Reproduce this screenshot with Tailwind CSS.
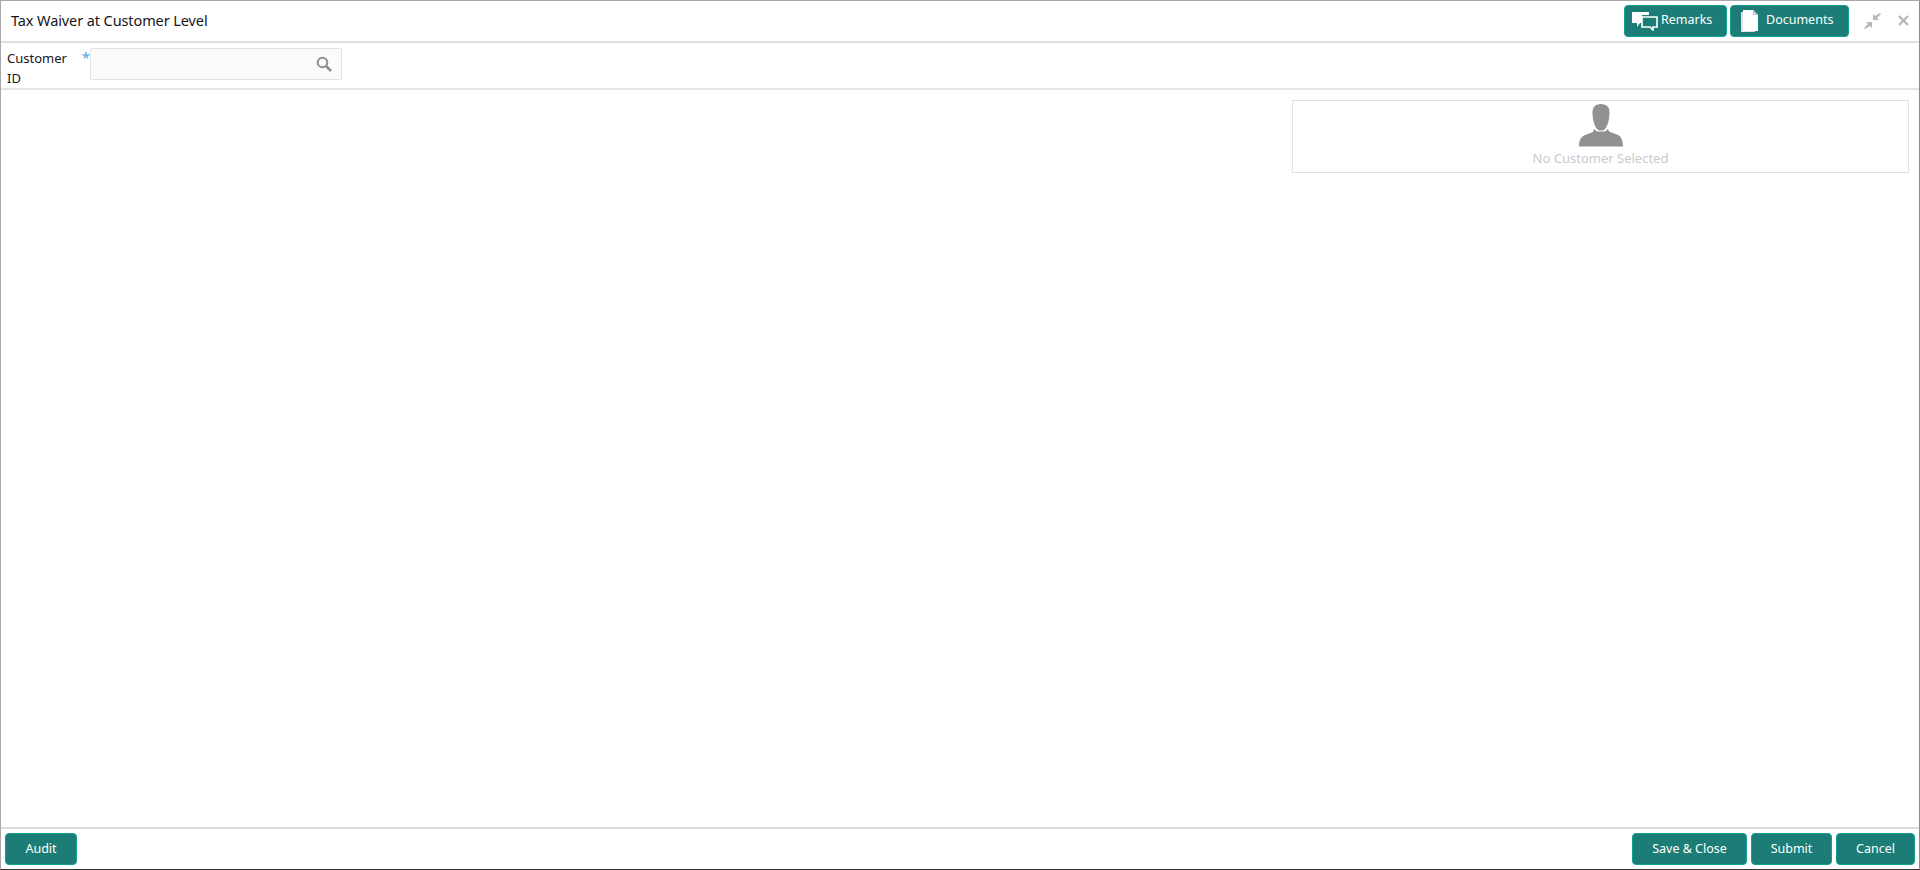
<!DOCTYPE html>
<html><head><meta charset="utf-8"><script src="https://cdn.jsdelivr.net/npm/@tailwindcss/browser@4"></script></head>
<body class="bg-white">
<div class="h-[870px] w-[1920px] flex flex-col overflow-hidden border-t border-l border-r border-t-[#a8a8a8] border-l-[#a8a8a8] border-r-[#8c8c8c] border-b border-b-[#333] font-['Noto_Sans','Open_Sans',sans-serif] text-[#16151a]">
  <header class="h-[42px] shrink-0 flex items-center border-b-2 border-[#dfdfdf] pl-[10px]">
    <h1 class="text-[14.5px] font-normal tracking-[-0.1px] flex-1">Tax Waiver at Customer Level</h1>
    <div class="flex items-center gap-[3px] pb-[1px]">
      <button class="h-[32px] w-[103px] flex items-center rounded-[4px] bg-[#1c7d76] border border-[#12a092] text-white text-[12.5px] pl-[6px] gap-[3px]">
        <svg width="27" height="20" viewBox="0 0 27 20" fill="none"><path d="M1 1h17v3h-7v8H9l-3 4v-4H1z" fill="#fff"/><path d="M11 6h15v10h-4v3l-3-3h-8z" fill="#1c7d76" stroke="#fff" stroke-width="1.6"/></svg>
        <span>Remarks</span>
      </button>
      <button class="h-[32px] w-[119px] flex items-center rounded-[4px] bg-[#1c7d76] border border-[#12a092] text-white text-[12.5px] pl-[9px] gap-[7px]">
        <svg width="19" height="24" viewBox="0 0 19 24"><path d="M1 3h2v19h12v1H1z" fill="#e3dcf2"/><path d="M3 1h10l5 5v16H3z" fill="#fff"/><path d="M13 1l5 5h-5z" fill="#c9c3dd"/></svg>
        <span>Documents</span>
      </button>
    </div>
    <div class="w-[70px] flex items-center pl-[15px] gap-[17px] pb-[1px]">
      <svg width="17" height="16" viewBox="0 0 17 16" fill="#b9b9b9"><path d="M16 0l1 1-4 4 2 2H9V1l2 2z"/><path d="M1 16l-1-1 4-4-2-2h6v6l-2-2z"/></svg>
      <svg width="11" height="11" viewBox="0 0 11 11" stroke="#b4b4b4" stroke-width="2.2"><path d="M1 1l9 9M10 1l-9 9"/></svg>
    </div>
  </header>
  <section class="h-[47px] shrink-0 flex items-start border-b-2 border-[#e4e4e4] pl-[6px] pt-[5px]">
    <label class="text-[13px] w-[83px] h-[32px] flex items-start pt-[1px] gap-[5px]"><span>Customer ID</span><span class="text-[#4aa7e8] text-[15px] leading-[16px]">*</span></label>
    <div class="w-[252px] h-[32px] bg-[#fbfbfb] border border-[#e3e3e3] rounded-[2px] flex items-center justify-end pr-[9px]">
      <svg width="16" height="16" viewBox="0 0 16 16" fill="none" stroke="#8f8f8f"><circle cx="6.5" cy="6.5" r="4.8" stroke-width="2"/><path d="M10 10l5 5" stroke-width="2.6"/></svg>
    </div>
  </section>
  <main class="flex-1 flex justify-end pt-[10px] pr-[10px]">
    <div class="w-[617px] h-[73px] border border-[#e2e2e2] flex flex-col items-center">
      <svg class="mt-[3px]" width="44" height="43" viewBox="0 0 44 43" fill="#919191"><path d="M22 0c6 0 8.500 3.500 8.500 8.500 0 6-1.500 13-4.500 16.500-1 1-2.500 1.500-4 1.500s-3-.5-4-1.500c-3-3.500-4.500-10.500-4.500-16.500C13.500 3.500 16 0 22 0z"/><path d="M15 25l3 2.500h8l3-2.500 1 2.500 9 3.500c3 1.500 5 5 5 11.500H0C0 36.500 2 33 5 31.500l9-3.500z"/></svg>
      <span class="text-[13px] leading-[18px] text-[#c9c9ce] mt-[2px]">No Customer Selected</span>
    </div>
  </main>
  <footer class="h-[42px] shrink-0 flex items-start justify-between border-t-2 border-[#dcdcdc] pt-[4px] pl-[4px] pr-[4px]">
    <button class="h-[32px] w-[72px] rounded-[4px] bg-[#1c7d76] border border-[#12a092] text-white text-[12.5px]">Audit</button>
    <div class="flex gap-[4px]">
      <button class="h-[32px] w-[115px] rounded-[4px] bg-[#1c7d76] border border-[#12a092] text-white text-[12.5px]">Save &amp; Close</button>
      <button class="h-[32px] w-[81px] rounded-[4px] bg-[#1c7d76] border border-[#12a092] text-white text-[12.5px]">Submit</button>
      <button class="h-[32px] w-[79px] rounded-[4px] bg-[#1c7d76] border border-[#12a092] text-white text-[12.5px]">Cancel</button>
    </div>
  </footer>
</div>
</body></html>
